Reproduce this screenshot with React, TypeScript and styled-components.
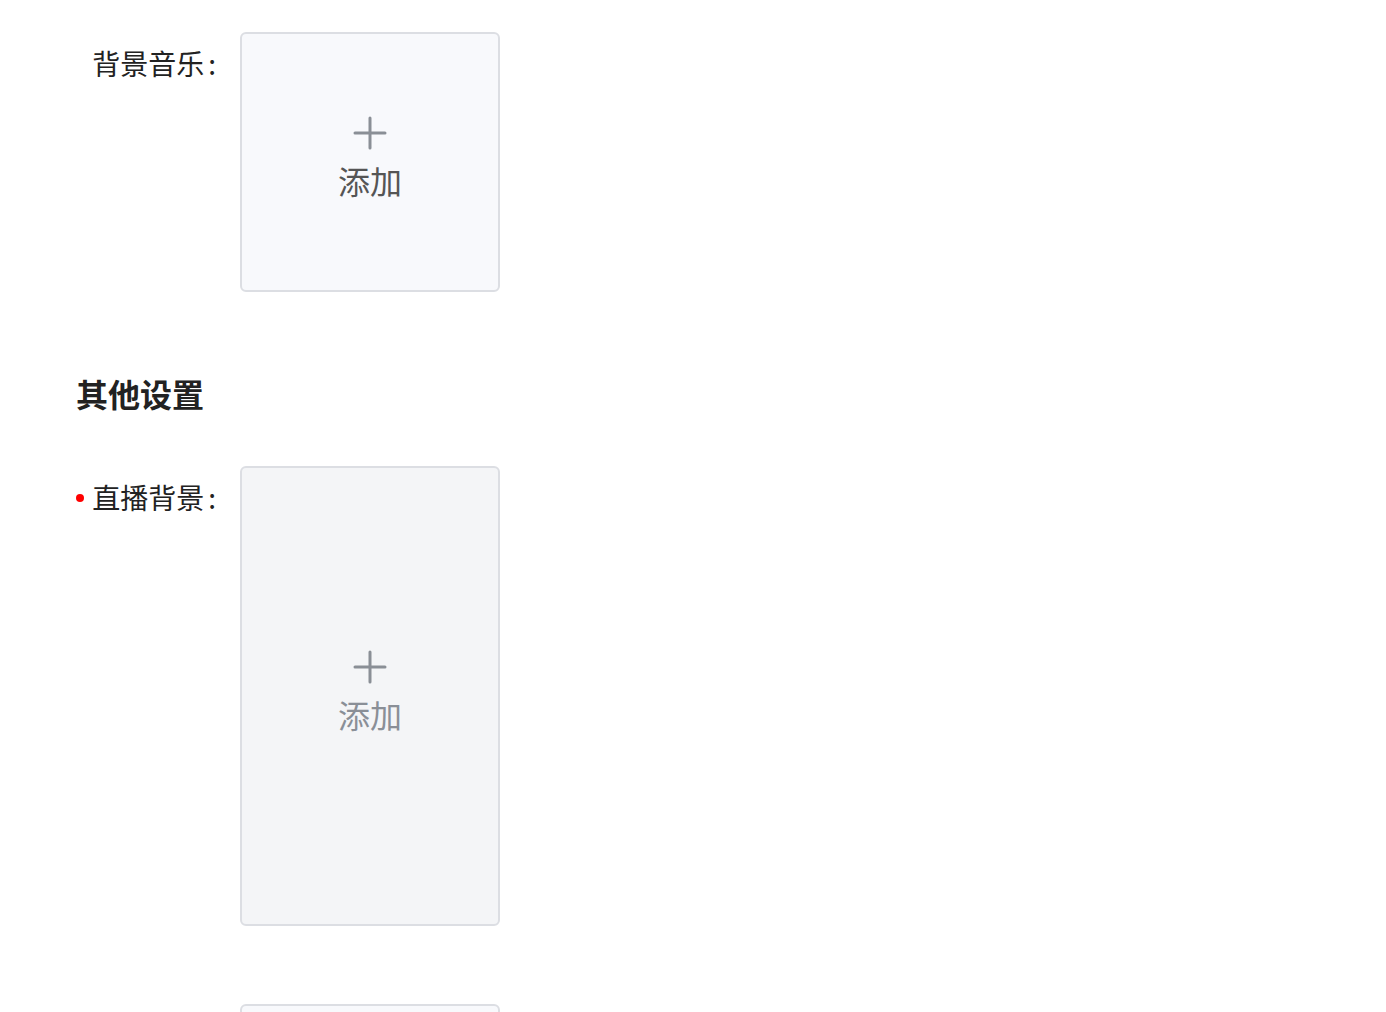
import styled, { createGlobalStyle } from "styled-components";

const GlobalStyle = createGlobalStyle`
  html, body {
    margin: 0;
    padding: 0;
    background: #fff;
    font-family: "Noto Sans CJK SC", "Noto Sans", sans-serif;
    color: #222;
  }
`;

const Page = styled.div`
  padding: 32px 0 0 76px;
  height: 1012px;
  overflow: hidden;
  box-sizing: border-box;
`;

const FormItem = styled.div`
  display: flex;
  align-items: flex-start;
  margin-bottom: 78px;
`;

const Label = styled.label<{ $required?: boolean }>`
  position: relative;
  width: 140px;
  flex-shrink: 0;
  margin-right: 24px;
  text-align: right;
  font-size: 28px;
  line-height: 63px;
  color: #222;
  white-space: nowrap;

  &::before {
    content: "";
    display: ${({ $required }) => ($required ? "block" : "none")};
    position: absolute;
    left: 0;
    top: 28px;
    width: 8px;
    height: 8px;
    border-radius: 50%;
    background: #f00;
  }
`;

const Colon = styled.span`
  margin-left: 4px;
`;

const Upload = styled.div<{ $tall?: boolean; $muted?: boolean }>`
  width: 260px;
  height: ${({ $tall }) => ($tall ? "460px" : "260px")};
  box-sizing: border-box;
  padding-bottom: 6px;
  border: 2px solid #dcdee3;
  border-radius: 6px;
  background: ${({ $muted }) => ($muted ? "#f4f5f7" : "#f8f9fc")};
  display: flex;
  flex-direction: column;
  align-items: center;
  justify-content: center;
  gap: 8px;
  color: ${({ $muted }) => ($muted ? "#8a8f97" : "#555")};
  cursor: pointer;
`;

const AddText = styled.span`
  font-size: 32px;
  line-height: 44px;
`;

const SectionTitle = styled.h2`
  margin: 0 0 50px;
  font-size: 32px;
  font-weight: 700;
  line-height: 46px;
  color: #222;
`;

const Plus = () => (
  <svg width="34" height="34" viewBox="0 0 34 34" fill="none">
    <path d="M17 2v30M2 17h30" stroke="#8a8f96" strokeWidth="3" strokeLinecap="round" />
  </svg>
);

const UploadBox = ({ tall, muted }: { tall?: boolean; muted?: boolean }) => (
  <Upload $tall={tall} $muted={muted}>
    <Plus />
    <AddText>添加</AddText>
  </Upload>
);

export default function App() {
  return (
    <>
      <GlobalStyle />
      <Page>
        <FormItem>
          <Label>
            背景音乐<Colon>:</Colon>
          </Label>
          <UploadBox />
        </FormItem>

        <SectionTitle>其他设置</SectionTitle>

        <FormItem>
          <Label $required>
            直播背景<Colon>:</Colon>
          </Label>
          <UploadBox tall muted />
        </FormItem>

        <FormItem>
          <Label />
          <Upload />
        </FormItem>
      </Page>
    </>
  );
}
